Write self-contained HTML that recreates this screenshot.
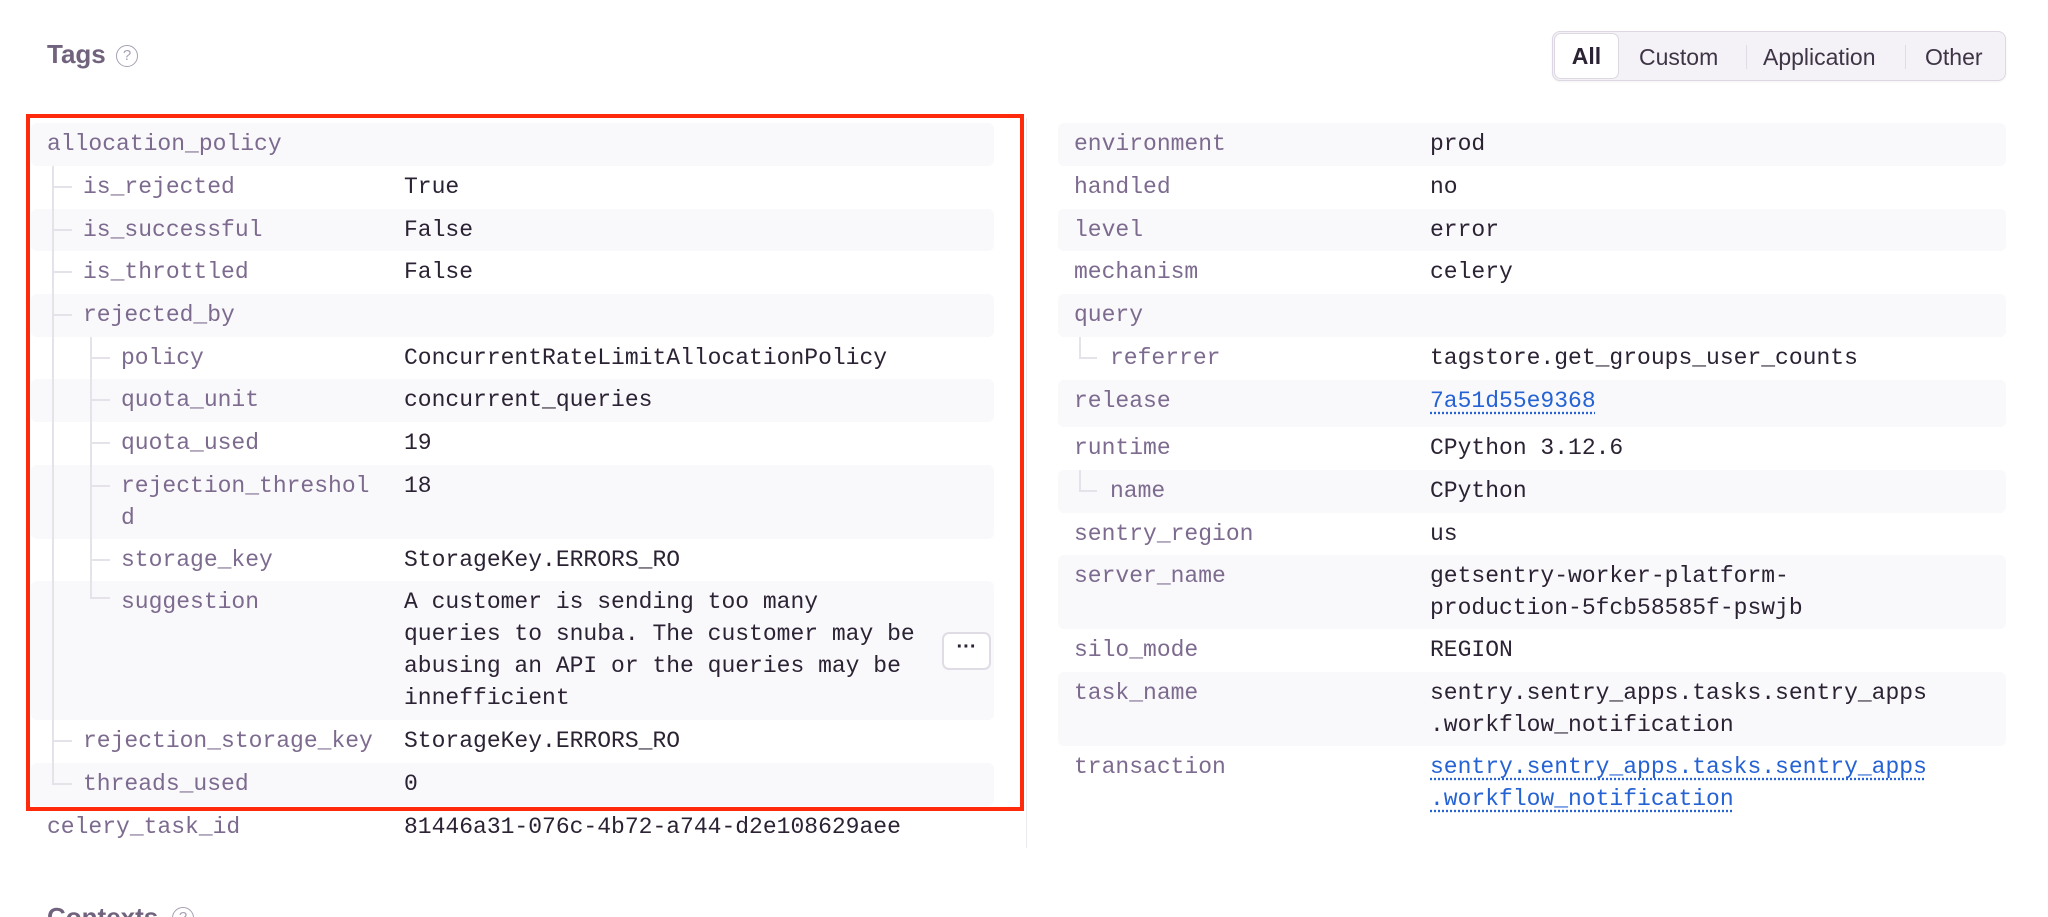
<!DOCTYPE html>
<html style="height:917px;overflow:hidden"><head><meta charset="utf-8"><style>
*{margin:0;padding:0;box-sizing:border-box}
body{width:2048px;height:917px;background:#fff;position:relative;overflow:hidden;font-family:"Liberation Mono",monospace;}
.h{position:absolute;left:47px;top:39px;font:bold 26px "Liberation Sans",sans-serif;color:#71637e}
.q{position:absolute;left:116px;top:45px;width:22px;height:22px;border:1.5px solid #a89fb3;border-radius:50%;font:15px "Liberation Sans",sans-serif;color:#a89fb3;text-align:center;line-height:19px}
.seg{position:absolute;left:1552px;top:31px;width:454px;height:50px;border:1px solid #dcd7e2;border-radius:8px;background:#f4f2f7;box-shadow:0 1px 2px rgba(0,0,0,.05);font:23px "Liberation Sans",sans-serif;color:#3e3446}
.seg span{position:absolute;top:12px}
.seg .all{position:absolute;left:1px;top:1px;width:65px;height:46px;background:#fff;border:1px solid #dcd7e2;border-radius:7px;font-weight:bold;color:#2b2233;text-align:center;line-height:44px}
.seg .d{position:absolute;top:13px;width:1px;height:24px;background:#e0dce5}
.r{position:absolute;border-radius:6px;font-size:23px;line-height:32px;padding:5px 0;color:#2b2233}
.s{background:#f9f8fb}
.k{position:absolute;color:#7d6b8f;white-space:pre}
.v{position:absolute;white-space:pre}
.L .k{left:16px}.L .v{left:373px}
.R .k{left:16px}.R .v{left:372px}
a{color:#2562d4;text-decoration:underline dotted;text-underline-offset:5px}
.vl{position:absolute;width:2px;background:#e6e2ea}
.tk{position:absolute;height:2px;width:20px;background:#e6e2ea}
.red{position:absolute;left:26px;top:114px;width:998px;height:697px;border:4px solid #ff2a0c}
</style></head><body>
<div class="h">Tags</div><div class="q">?</div>
<div class="seg"><div class="all">All</div><span style="left:86px">Custom</span><div class="d" style="left:193px"></div><span style="left:210px">Application</span><div class="d" style="left:352px"></div><span style="left:372px">Other</span></div>

<div class="L">
<div class="r s" style="left:31px;top:123px;width:963px;height:43px"><span class="k">allocation_policy</span></div>
<div class="r" style="left:31px;top:166px;width:963px;height:43px"><span class="k" style="left:52px">is_rejected</span><span class="v">True</span></div>
<div class="r s" style="left:31px;top:209px;width:963px;height:42px"><span class="k" style="left:52px">is_successful</span><span class="v">False</span></div>
<div class="r" style="left:31px;top:251px;width:963px;height:43px"><span class="k" style="left:52px">is_throttled</span><span class="v">False</span></div>
<div class="r s" style="left:31px;top:294px;width:963px;height:43px"><span class="k" style="left:52px">rejected_by</span></div>
<div class="r" style="left:31px;top:337px;width:963px;height:42px"><span class="k" style="left:90px">policy</span><span class="v">ConcurrentRateLimitAllocationPolicy</span></div>
<div class="r s" style="left:31px;top:379px;width:963px;height:43px"><span class="k" style="left:90px">quota_unit</span><span class="v">concurrent_queries</span></div>
<div class="r" style="left:31px;top:422px;width:963px;height:43px"><span class="k" style="left:90px">quota_used</span><span class="v">19</span></div>
<div class="r s" style="left:31px;top:465px;width:963px;height:74px"><span class="k" style="left:90px">rejection_threshol
d</span><span class="v">18</span></div>
<div class="r" style="left:31px;top:539px;width:963px;height:42px"><span class="k" style="left:90px">storage_key</span><span class="v">StorageKey.ERRORS_RO</span></div>
<div class="r s" style="left:31px;top:581px;width:963px;height:139px"><span class="k" style="left:90px">suggestion</span><span class="v">A customer is sending too many
queries to snuba. The customer may be
abusing an API or the queries may be
innefficient</span></div>
<div class="r" style="left:31px;top:720px;width:963px;height:43px"><span class="k" style="left:52px">rejection_storage_key</span><span class="v">StorageKey.ERRORS_RO</span></div>
<div class="r s" style="left:31px;top:763px;width:963px;height:43px"><span class="k" style="left:52px">threads_used</span><span class="v">0</span></div>
<div class="r" style="left:31px;top:806px;width:963px;height:43px"><span class="k">celery_task_id</span><span class="v">81446a31-076c-4b72-a744-d2e108629aee</span></div>
</div>
<div class="vl" style="left:52px;top:166px;height:619px"></div>
<div class="tk" style="left:52px;top:186px"></div><div class="tk" style="left:52px;top:229px"></div><div class="tk" style="left:52px;top:271px"></div><div class="tk" style="left:52px;top:314px"></div><div class="tk" style="left:52px;top:740px"></div><div class="tk" style="left:52px;top:783px"></div>
<div class="vl" style="left:90px;top:337px;height:262px"></div>
<div class="tk" style="left:90px;top:357px"></div><div class="tk" style="left:90px;top:399px"></div><div class="tk" style="left:90px;top:442px"></div><div class="tk" style="left:90px;top:485px"></div><div class="tk" style="left:90px;top:559px"></div><div class="tk" style="left:90px;top:597px"></div>
<div style="position:absolute;left:942px;top:632px;width:49px;height:38px;background:#fff;border:2px solid #e0dce5;border-radius:7px;text-align:center;font:bold 20px 'Liberation Sans',sans-serif;line-height:26px;color:#2b2233">···</div>
<div class="red"></div>
<div style="position:absolute;left:1026px;top:118px;width:1px;height:730px;background:#ebe8ee"></div>

<div class="R">
<div class="r s" style="left:1058px;top:123px;width:948px;height:43px"><span class="k">environment</span><span class="v">prod</span></div>
<div class="r" style="left:1058px;top:166px;width:948px;height:43px"><span class="k">handled</span><span class="v">no</span></div>
<div class="r s" style="left:1058px;top:209px;width:948px;height:42px"><span class="k">level</span><span class="v">error</span></div>
<div class="r" style="left:1058px;top:251px;width:948px;height:43px"><span class="k">mechanism</span><span class="v">celery</span></div>
<div class="r s" style="left:1058px;top:294px;width:948px;height:43px"><span class="k">query</span></div>
<div class="r" style="left:1058px;top:337px;width:948px;height:43px"><span class="k" style="left:52px">referrer</span><span class="v">tagstore.get_groups_user_counts</span></div>
<div class="r s" style="left:1058px;top:380px;width:948px;height:47px"><span class="k">release</span><span class="v"><a>7a51d55e9368</a></span></div>
<div class="r" style="left:1058px;top:427px;width:948px;height:43px"><span class="k">runtime</span><span class="v">CPython 3.12.6</span></div>
<div class="r s" style="left:1058px;top:470px;width:948px;height:43px"><span class="k" style="left:52px">name</span><span class="v">CPython</span></div>
<div class="r" style="left:1058px;top:513px;width:948px;height:42px"><span class="k">sentry_region</span><span class="v">us</span></div>
<div class="r s" style="left:1058px;top:555px;width:948px;height:74px"><span class="k">server_name</span><span class="v">getsentry-worker-platform-
production-5fcb58585f-pswjb</span></div>
<div class="r" style="left:1058px;top:629px;width:948px;height:43px"><span class="k">silo_mode</span><span class="v">REGION</span></div>
<div class="r s" style="left:1058px;top:672px;width:948px;height:74px"><span class="k">task_name</span><span class="v">sentry.sentry_apps.tasks.sentry_apps
.workflow_notification</span></div>
<div class="r" style="left:1058px;top:746px;width:948px;height:75px"><span class="k">transaction</span><span class="v"><a>sentry.sentry_apps.tasks.sentry_apps</a>
<a>.workflow_notification</a></span></div>
</div>
<div class="vl" style="left:1079px;top:337px;height:22px"></div><div class="tk" style="left:1079px;top:357px;width:18px"></div>
<div class="vl" style="left:1079px;top:470px;height:22px"></div><div class="tk" style="left:1079px;top:490px;width:18px"></div>

<div class="h" style="top:902px">Contexts</div><div class="q" style="left:172px;top:907px">?</div>
</body></html>
